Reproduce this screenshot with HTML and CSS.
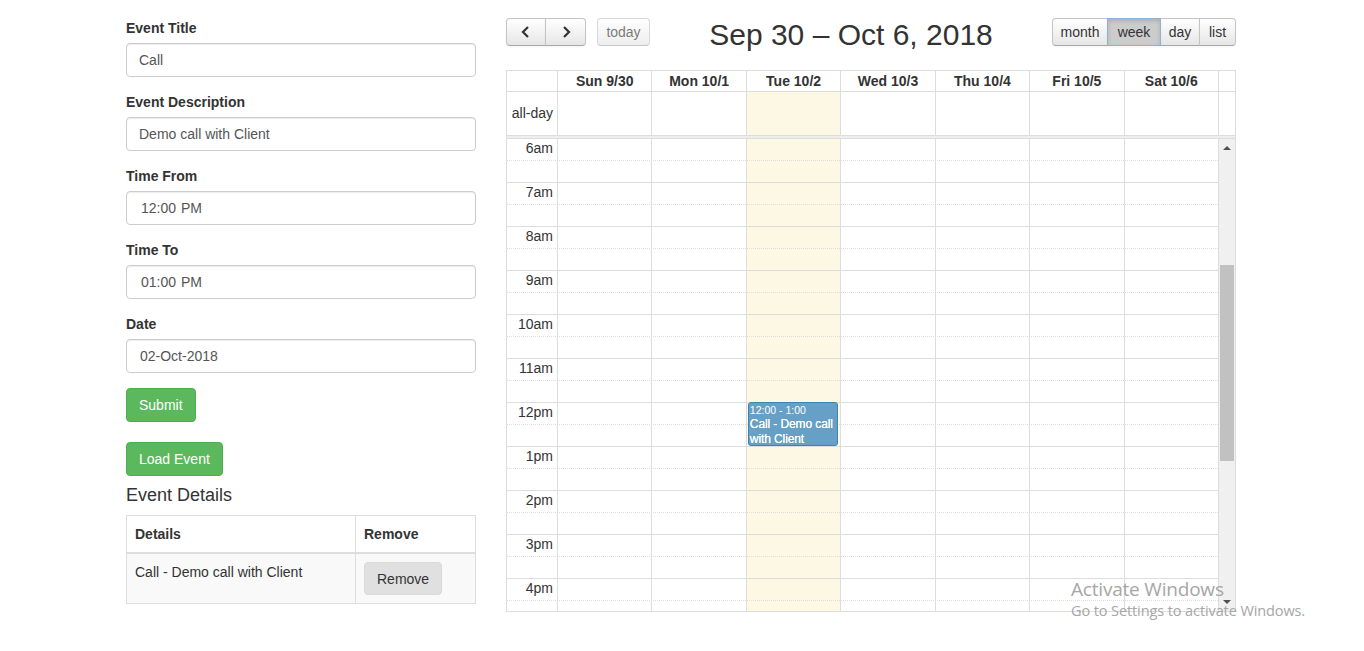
FILE: index.html
```html
<!DOCTYPE html>
<html>
<head>
<meta charset="utf-8">
<link rel="stylesheet" href="styles.css">
</head>
<body>
<div class="page">
  <div class="form-col">
    <div class="form-group">
      <label>Event Title</label>
      <div class="input">Call</div>
    </div>
    <div class="form-group">
      <label>Event Description</label>
      <div class="input">Demo call with Client</div>
    </div>
    <div class="form-group">
      <label>Time From</label>
      <div class="input time">12:00 PM</div>
    </div>
    <div class="form-group">
      <label>Time To</label>
      <div class="input time">01:00 PM</div>
    </div>
    <div class="form-group">
      <label>Date</label>
      <div class="input date">02-Oct-2018</div>
    </div>
    <button class="btn-success">Submit</button>
    <button class="btn-success load">Load Event</button>
    <h4 class="details-title">Event Details</h4>
    <table class="details">
      <thead>
        <tr><th class="c1">Details</th><th>Remove</th></tr>
      </thead>
      <tbody>
        <tr><td class="c1">Call - Demo call with Client</td><td><button class="btn-remove">Remove</button></td></tr>
      </tbody>
    </table>
  </div>

  <div class="calendar">
    <div class="toolbar">
      <div class="tb-left">
        <div class="btn-group">
          <button class="fc-btn nav first"><svg width="12" height="14" viewBox="0 0 12 14"><polyline points="8,2 3,7 8,12" fill="none" stroke="#333" stroke-width="2.2"/></svg></button>
          <button class="fc-btn nav last"><svg width="12" height="14" viewBox="0 0 12 14"><polyline points="4,2 9,7 4,12" fill="none" stroke="#333" stroke-width="2.2"/></svg></button>
        </div>
        <button class="fc-btn today">today</button>
      </div>
      <h2 class="title">Sep 30 – Oct 6, 2018</h2>
      <div class="btn-group">
        <button class="fc-btn first v-month">month</button>
        <button class="fc-btn active v-week">week</button>
        <button class="fc-btn v-day">day</button>
        <button class="fc-btn last v-list">list</button>
      </div>
    </div>

    <div class="grid-box">
      <div class="head-row">
        <div class="cell axis"></div>
        <div class="cell">Sun 9/30</div>
        <div class="cell">Mon 10/1</div>
        <div class="cell">Tue 10/2</div>
        <div class="cell">Wed 10/3</div>
        <div class="cell">Thu 10/4</div>
        <div class="cell">Fri 10/5</div>
        <div class="cell">Sat 10/6</div>
        <div class="cell gutter"></div>
      </div>
      <div class="allday-row">
        <div class="cell axis">all-day</div>
        <div class="cell"></div>
        <div class="cell"></div>
        <div class="cell today-bg"></div>
        <div class="cell"></div>
        <div class="cell"></div>
        <div class="cell"></div>
        <div class="cell"></div>
        <div class="cell gutter"></div>
      </div>
      <div class="divider"></div>
      <div class="tg-body">
        <div class="tg-scroll">
          <div class="tg-bg">
            <div class="col axis"></div>
            <div class="col"></div>
            <div class="col"></div>
            <div class="col today-bg"></div>
            <div class="col"></div>
            <div class="col"></div>
            <div class="col"></div>
            <div class="col"></div>
          </div>
          <div class="slats">
            <div class="slot"><span class="lbl">6am</span></div><div class="slot half"></div>
            <div class="slot"><span class="lbl">7am</span></div><div class="slot half"></div>
            <div class="slot"><span class="lbl">8am</span></div><div class="slot half"></div>
            <div class="slot"><span class="lbl">9am</span></div><div class="slot half"></div>
            <div class="slot"><span class="lbl">10am</span></div><div class="slot half"></div>
            <div class="slot"><span class="lbl">11am</span></div><div class="slot half"></div>
            <div class="slot"><span class="lbl">12pm</span></div><div class="slot half"></div>
            <div class="slot"><span class="lbl">1pm</span></div><div class="slot half"></div>
            <div class="slot"><span class="lbl">2pm</span></div><div class="slot half"></div>
            <div class="slot"><span class="lbl">3pm</span></div><div class="slot half"></div>
            <div class="slot"><span class="lbl">4pm</span></div><div class="slot half"></div>
            <div class="slot"></div><div class="slot half"></div>
          </div>
          <div class="tg-events">
            <div class="col axis"></div>
            <div class="col"></div>
            <div class="col"></div>
            <div class="col ev-col">
              <div class="event">
                <div class="ev-time">12:00 - 1:00</div>
                <div class="ev-title">Call - Demo call with Client</div>
              </div>
            </div>
            <div class="col"></div>
            <div class="col"></div>
            <div class="col"></div>
            <div class="col"></div>
          </div>
        </div>
        <div class="sbar">
          <div class="sb-arrow up"></div>
          <div class="sb-track"><div class="sb-thumb"></div></div>
          <div class="sb-arrow down"></div>
        </div>
      </div>
    </div>
  </div>
</div>
<div class="watermark">
  <div class="wm1">Activate Windows</div>
  <div class="wm2">Go to Settings to activate Windows.</div>
</div>
</body>
</html>
```
FILE: styles.css
```css
* { box-sizing: border-box; }
html, body { margin: 0; padding: 0; background: #fff; }
body {
  font-family: "Liberation Sans", Arial, Helvetica, sans-serif;
  font-size: 14px;
  line-height: 20px;
  color: #333;
  width: 1364px;
  height: 651px;
  overflow: hidden;
  position: relative;
}
button { font-family: inherit; font-size: 14px; }

.page {
  display: flex;
  gap: 30px;
  padding: 18px 0 0 126px;
  align-items: flex-start;
}

/* form column */
.form-col { width: 350px; display: flex; flex-direction: column; align-items: flex-start; }
.form-group { width: 100%; margin-bottom: 15px; }
.form-group label { display: block; font-weight: bold; margin-bottom: 5px; line-height: 20px; }
.input {
  height: 34px;
  width: 100%;
  border: 1px solid #ccc;
  border-radius: 4px;
  box-shadow: inset 0 1px 1px rgba(0,0,0,.075);
  padding: 6px 12px;
  color: #555;
  line-height: 20px;
}
.input.time { padding-left: 14px; word-spacing: 1px; }
.input.date { padding-left: 13px; }

.btn-success {
  background: #5cb85c;
  border: 1px solid #4cae4c;
  color: #fff;
  border-radius: 4px;
  padding: 6px 12px;
  line-height: 20px;
  height: 34px;
}
.btn-success.load { margin-top: 20px; }
.details-title {
  font-size: 18px;
  font-weight: normal;
  line-height: 20px;
  margin: 9px 0 10px;
}
.details {
  width: 350px;
  border-collapse: collapse;
  border: 1px solid #ddd;
}
.details th, .details td {
  border: 1px solid #ddd;
  padding: 8px;
  text-align: left;
  vertical-align: top;
  line-height: 20px;
}
.details th { border-bottom: 2px solid #ddd; }
.details .c1 { width: 229px; }
.details tbody tr { background: #f9f9f9; }
.btn-remove {
  background: #e0e0e0;
  border: 1px solid #d9d9d9;
  border-radius: 4px;
  color: #333;
  padding: 6px 12px;
  height: 33px;
  width: 78px;
  line-height: 20px;
}

/* calendar */
.calendar { width: 730px; }
.toolbar {
  display: flex;
  justify-content: space-between;
  align-items: flex-start;
  height: 28px;
  margin-bottom: 24px;
}
.tb-left { display: flex; gap: 12px; }
.btn-group { display: flex; }
.fc-btn {
  height: 28px;
  padding: 0;
  border: 1px solid #c4c4c4;
  border-bottom-color: #a8a8a8;
  background: linear-gradient(#ffffff, #e6e6e6);
  color: #333;
  box-shadow: inset 0 1px 0 rgba(255,255,255,.2), 0 1px 2px rgba(0,0,0,.05);
  border-radius: 0;
  margin-left: -1px;
  line-height: 26px;
  text-align: center;
}
.fc-btn.first { border-radius: 4px 0 0 4px; margin-left: 0; }
.fc-btn.last { border-radius: 0 4px 4px 0; }
.v-month { width: 56px; }
.v-week { width: 54px; }
.v-day { width: 40px; }
.v-list { width: 37px; }
.fc-btn.nav { width: 40px; padding: 0; display: flex; align-items: center; justify-content: center; }
.fc-btn.nav.last { width: 41px; }
.fc-btn.today { border-radius: 4px; opacity: .65; box-shadow: none; width: 53px; padding: 0; }
.fc-btn.active {
  background: #cccccc;
  border-color: #8fb1da;
  box-shadow: inset 0 2px 4px rgba(0,0,0,.15), 0 1px 2px rgba(0,0,0,.05);
  position: relative;
  z-index: 1;
}
.title {
  margin: 0;
  padding-top: 0;
  font-size: 30px;
  font-weight: normal;
  line-height: 33px;
  color: #333;
}

.grid-box { border: 1px solid #ddd; }
.head-row, .allday-row {
  display: grid;
  grid-template-columns: 50px repeat(7, 1fr) 17px;
}
.head-row .cell {
  font-weight: bold;
  text-align: center;
  height: 21px;
  line-height: 20px;
  border-left: 1px solid #ddd;
  border-bottom: 1px solid #ddd;
}
.head-row .cell:first-child, .allday-row .cell:first-child { border-left: 0; }
.allday-row .cell {
  height: 43px;
  border-left: 1px solid #ddd;
}
.allday-row .axis { text-align: right; padding: 11px 4px 0 0; white-space: nowrap; }
.today-bg { background: #fcf8e3; }
.divider {
  height: 4px;
  background: #eee;
  border-top: 1px solid #ddd;
  border-bottom: 1px solid #ddd;
}

.tg-body { display: flex; height: 472px; }
.tg-scroll { flex: 1; position: relative; overflow: hidden; }
.tg-bg, .tg-events {
  position: absolute;
  inset: 0;
  display: grid;
  grid-template-columns: 50px repeat(7, 1fr);
}
.tg-bg .col { border-left: 1px solid #ddd; }
.tg-bg .col.axis { border-left: 0; }
.tg-events { pointer-events: none; }
.ev-col { position: relative; }
.event {
  position: absolute;
  top: 263px;
  left: 2px;
  right: 2px;
  height: 44px;
  background: #66a0c6;
  border: 1px solid #3a87ad;
  border-radius: 3px;
  color: #fff;
  padding: 0 1px;
  overflow: hidden;
}
.ev-time { font-size: 10.5px; line-height: 13px; margin-top: 1px; }
.ev-title { font-size: 12px; line-height: 15px; font-weight: normal; letter-spacing: -0.1px; text-shadow: 0 0 0.4px #fff; }

.slats { position: relative; }
.slot {
  height: 22px;
  border-bottom: 1px dotted #ddd;
  position: relative;
}
.slot.half { border-bottom: 1px solid #ddd; }
.slot .lbl {
  display: block;
  width: 50px;
  text-align: right;
  padding-right: 4px;
  line-height: 19px;
}

.sbar {
  width: 17px;
  background: #f0f0f0;
  border-left: 1px solid #ddd;
  display: flex;
  flex-direction: column;
}
.sb-arrow { height: 17px; position: relative; }
.sb-arrow::after {
  content: "";
  position: absolute;
  left: 4px;
  border-left: 4px solid transparent;
  border-right: 4px solid transparent;
}
.sb-arrow.up::after { top: 7px; border-bottom: 4px solid #505050; }
.sb-arrow.down::after { top: 6px; border-top: 4px solid #505050; }
.sb-track { flex: 1; padding: 109px 1px 0 1px; }
.sb-thumb { height: 196px; background: #c1c1c1; }

.watermark {
  position: absolute;
  left: 1071px;
  top: 577px;
  color: #a6a6a6;
  font-family: "Open Sans", "Noto Sans", sans-serif;
  pointer-events: none;
}
.wm1 { font-size: 19px; line-height: 24px; letter-spacing: -0.2px; }
.wm2 { font-size: 14.5px; line-height: 20px; letter-spacing: -0.1px; }
```
